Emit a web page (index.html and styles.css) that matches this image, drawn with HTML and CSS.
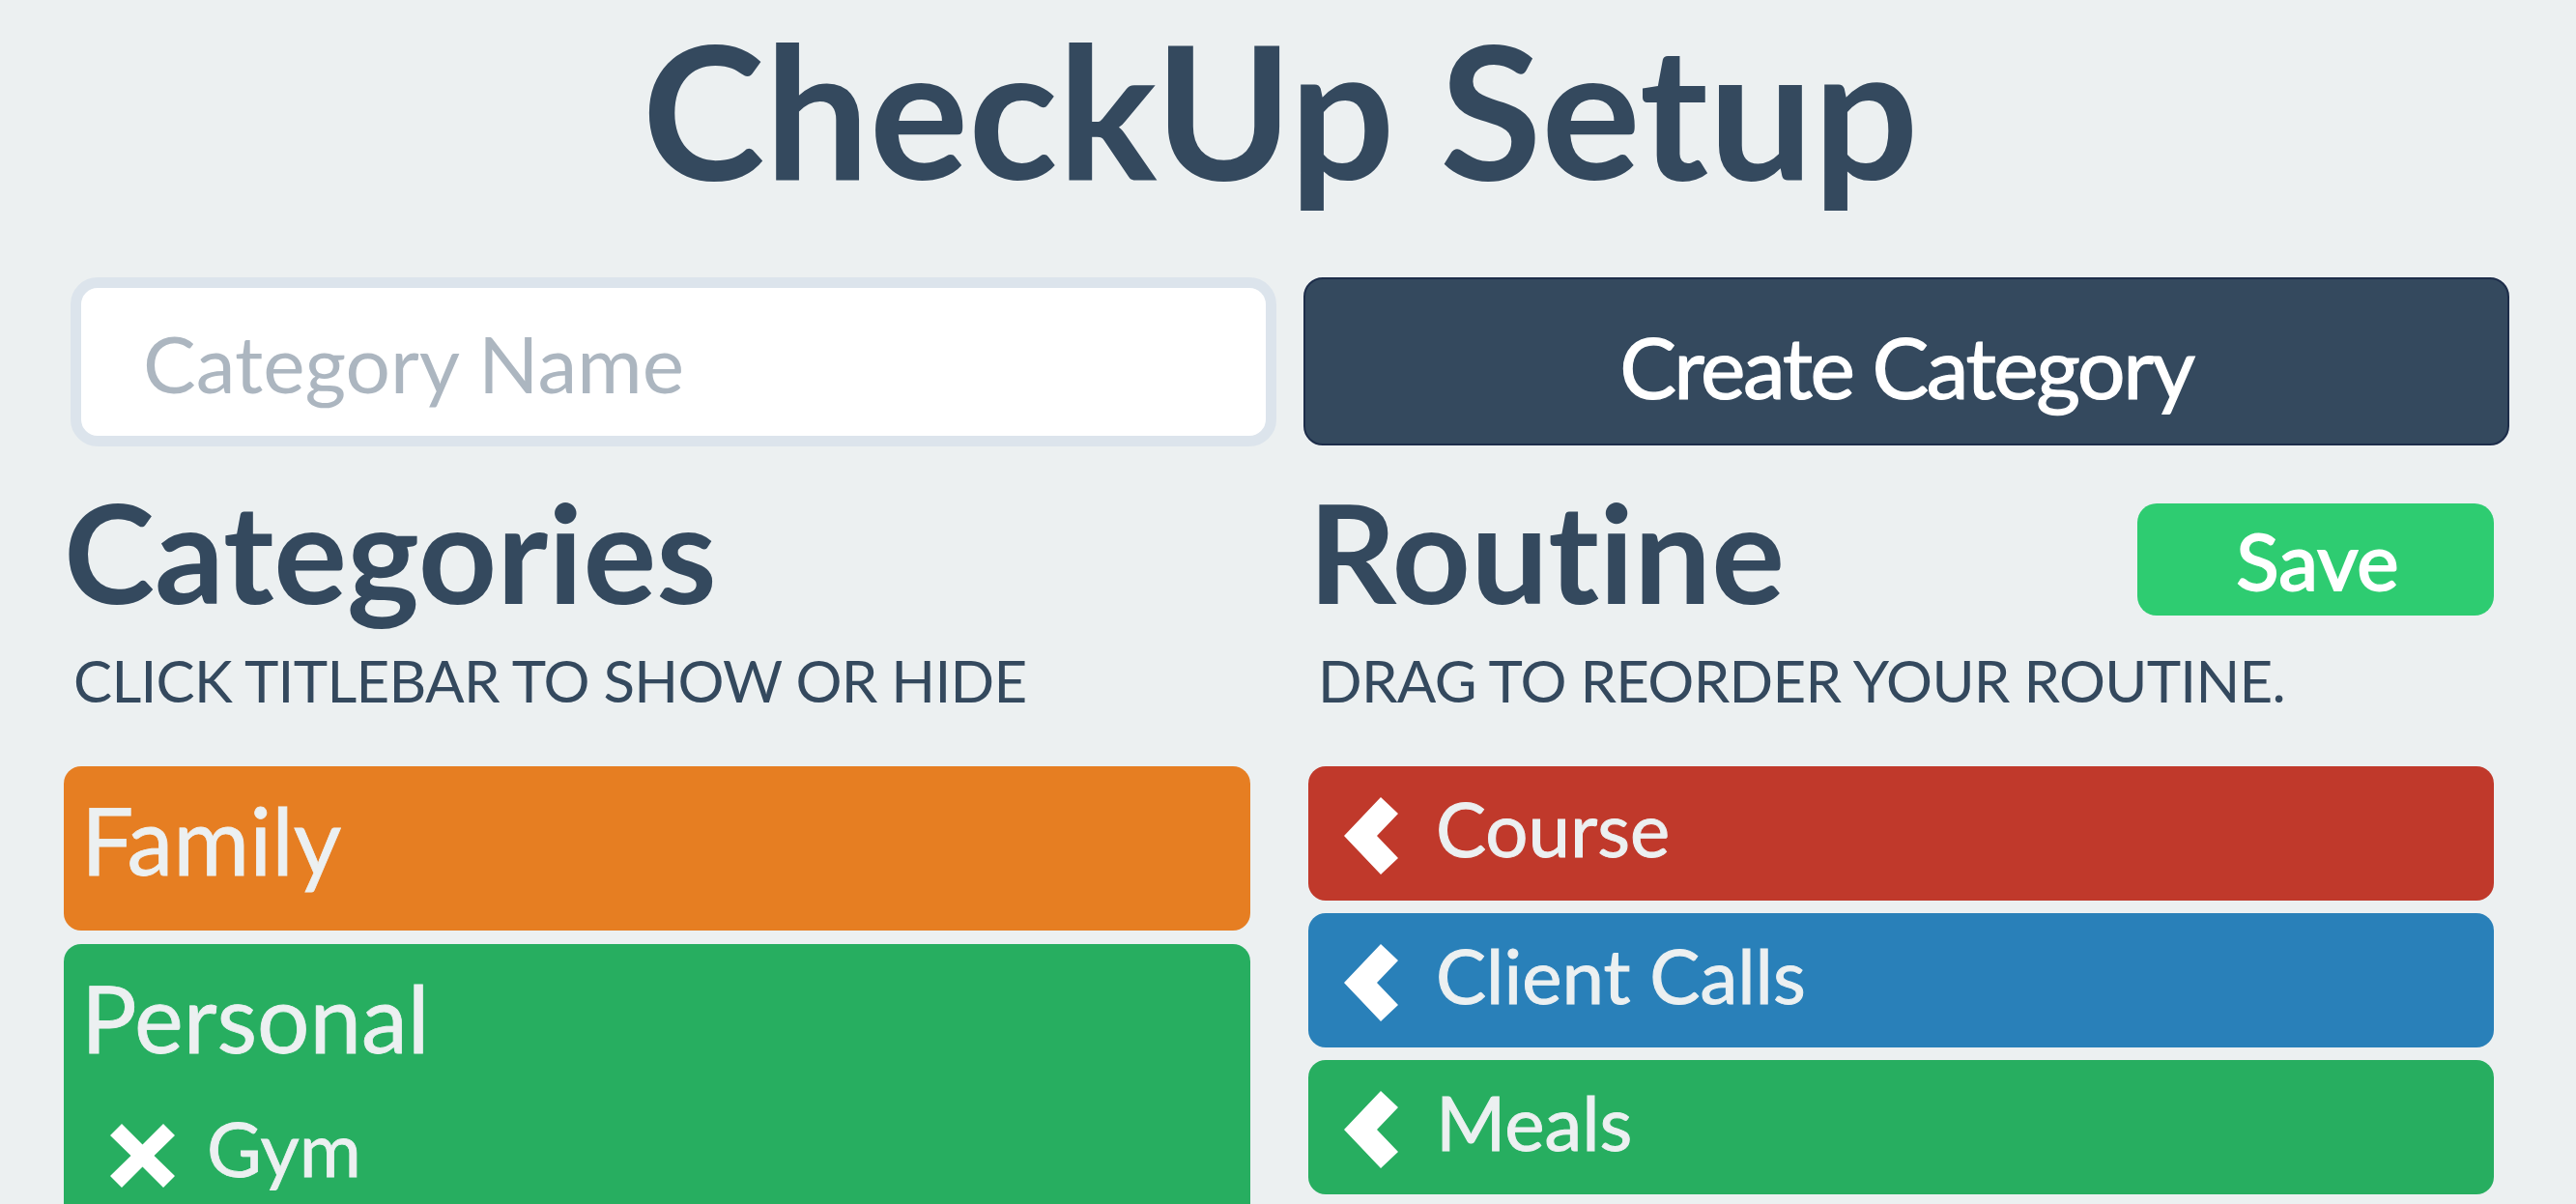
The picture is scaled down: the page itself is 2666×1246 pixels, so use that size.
FILE: index.html
```html
<!DOCTYPE html>
<html lang="en">
<head>
<meta charset="utf-8">
<title>CheckUp Setup</title>
<link rel="stylesheet" href="styles.css">
</head>
<body>
<div class="page">
  <h1 class="title">CheckUp Setup</h1>

  <div class="create-row">
    <input class="cat-input" type="text" placeholder="Category Name">
    <button class="create-btn" type="button">Create Category</button>
  </div>

  <div class="columns">
    <section class="col">
      <div class="col-head"><h2 class="col-title">Categories</h2></div>
      <p class="hint">CLICK TITLEBAR TO SHOW OR HIDE</p>
      <div class="list">
        <div class="cat cat-orange">
          <div class="cat-title">Family</div>
        </div>
        <div class="cat cat-green cat-open">
          <div class="cat-title">Personal</div>
          <ul class="cat-items">
            <li class="cat-item">
              <svg class="icon-x" viewBox="0 0 67 66" aria-hidden="true"><path d="M0 12 L12 0 L33.5 21.5 L55 0 L67 12 L45.5 33 L67 54 L55 66 L33.5 44.5 L12 66 L0 54 L21.5 33 Z" fill="#fff"/></svg>
              <span>Gym</span>
            </li>
          </ul>
        </div>
      </div>
    </section>

    <section class="col">
      <div class="col-head">
        <h2 class="col-title">Routine</h2>
        <button class="save-btn" type="button">Save</button>
      </div>
      <p class="hint">DRAG TO REORDER YOUR ROUTINE.</p>
      <div class="list">
        <div class="routine-item r-red">
          <svg class="icon-chev" viewBox="0 0 56 80" aria-hidden="true"><polygon points="0,40 38,0 56,17 34,40 56,63 38,80" fill="#fff"/></svg>
          <span>Course</span>
        </div>
        <div class="routine-item r-blue">
          <svg class="icon-chev" viewBox="0 0 56 80" aria-hidden="true"><polygon points="0,40 38,0 56,17 34,40 56,63 38,80" fill="#fff"/></svg>
          <span>Client Calls</span>
        </div>
        <div class="routine-item r-green">
          <svg class="icon-chev" viewBox="0 0 56 80" aria-hidden="true"><polygon points="0,40 38,0 56,17 34,40 56,63 38,80" fill="#fff"/></svg>
          <span>Meals</span>
        </div>
      </div>
    </section>
  </div>
</div>
</body>
</html>
```

FILE: styles.css
```css
html, body {
  margin: 0;
  padding: 0;
  overflow: hidden;
}

body {
  background: #ecf0f1;
  font-family: Lato, "Open Sans", "Liberation Sans", sans-serif;
  font-variant-ligatures: none;
  color: #34495e;
}

.page {
  width: 2666px;
}

.title {
  box-sizing: border-box;
  margin: 12px 0 0;
  padding-right: 16px;
  height: 200px;
  font-size: 192px;
  line-height: 200px;
  font-weight: 700;
  text-align: center;
  color: #34495e;
}

.create-row {
  display: grid;
  grid-template-columns: 1248px 1248px;
  column-gap: 28px;
  margin: 75px 0 0 73px;
}

.cat-input {
  box-sizing: border-box;
  height: 175px;
  border: 11px solid #dce4ec;
  border-radius: 28px;
  background: #fff;
  padding: 0 0 0 64px;
  font-family: Lato, "Open Sans", sans-serif;
  font-size: 82px;
  color: #34495e;
  outline: none;
}

.cat-input::placeholder {
  color: #acb6c0;
}

.create-btn {
  box-sizing: border-box;
  height: 174px;
  background: #34495e;
  border: 2px solid #1d2d4a;
  border-radius: 20px;
  padding: 10px 0 0;
  font-family: Lato, "Open Sans", sans-serif;
  font-variant-ligatures: none;
  font-size: 88px;
  letter-spacing: -2.5px;
  -webkit-text-stroke: 1.2px #fff;
  color: #fff;
}

.columns {
  display: grid;
  grid-template-columns: 1228px 1227px;
  column-gap: 60px;
  margin: 33px 0 0 66px;
}

.col-head {
  display: flex;
  justify-content: space-between;
  align-items: flex-start;
  height: 150px;
}

.col-title {
  margin: 0;
  font-size: 142px;
  line-height: 150px;
  font-weight: 700;
  color: #34495e;
}

.save-btn {
  margin-top: 26px;
  width: 369px;
  height: 116px;
  background: #2ecc71;
  border: none;
  border-radius: 20px;
  padding: 0 0 0 4px;
  font-family: Lato, "Open Sans", sans-serif;
  font-weight: 400;
  font-size: 82px;
  -webkit-text-stroke: 2px #fff;
  color: #fff;
}

.hint {
  margin: 23px 0 0 10px;
  font-size: 60px;
  line-height: 72px;
  letter-spacing: -0.7px;
  color: #34495e;
}

.list {
  margin-top: 53px;
}

.cat {
  border-radius: 18px;
  margin-bottom: 14px;
  color: #ecf0f1;
}

.cat-orange {
  background: #e67e22;
  padding-bottom: 37px;
}

.cat-green {
  background: #27ae60;
  padding-bottom: 120px;
}

.cat-title {
  padding: 18px 18px 0;
  font-size: 96px;
  line-height: 115px;
  -webkit-text-stroke: 0.8px #ecf0f1;
}

.cat-items {
  list-style: none;
  margin: 31px 0 0;
  padding: 0 0 0 48px;
}

.cat-item {
  display: flex;
  align-items: flex-start;
  font-size: 78px;
  line-height: 94px;
  -webkit-text-stroke: 0.8px #ecf0f1;
}

.icon-x {
  width: 67px;
  height: 66px;
  margin: 22px 33px 0 0;
  flex: none;
}

.routine-item {
  box-sizing: border-box;
  display: flex;
  align-items: flex-start;
  height: 139px;
  margin-bottom: 13px;
  padding: 17px 0 0 37px;
  border-radius: 18px;
  font-size: 78px;
  line-height: 94px;
  -webkit-text-stroke: 1px #ecf0f1;
  color: #ecf0f1;
}

.icon-chev {
  width: 56px;
  height: 80px;
  margin: 15px 39px 0 0;
  flex: none;
}

.r-red { background: #c0392b; }
.r-blue { background: #2980b9; }
.r-green { background: #27ae60; }
```
